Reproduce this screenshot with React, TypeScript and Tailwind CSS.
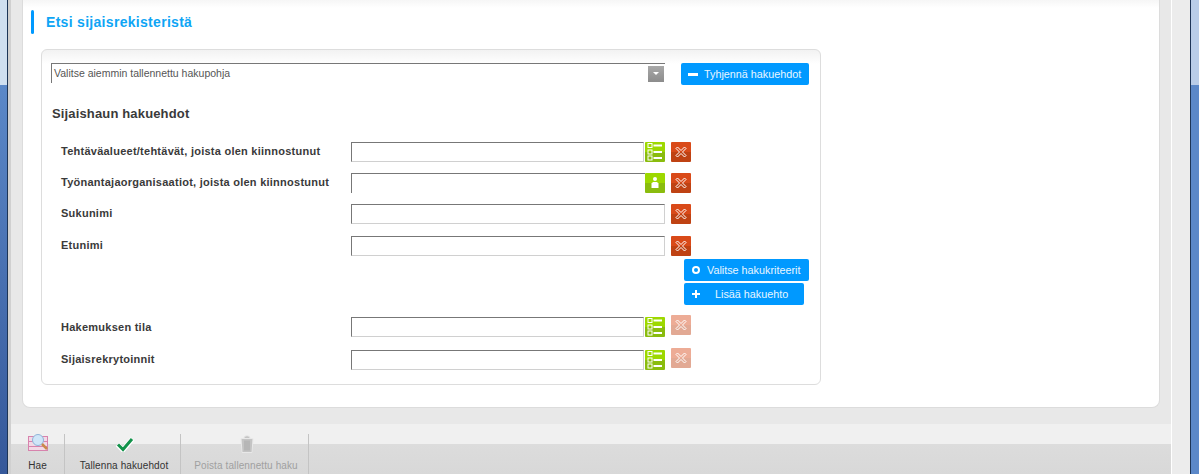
import React from 'react';

const ClearIcon = () => (
  <svg width="12" height="12" viewBox="0 0 12 12" fill="none" stroke="#fff" strokeWidth="1">
    <path d="M2.5 1 L6 4.5 L9.5 1 L11 2.5 L7.5 6 L11 9.5 L9.5 11 L6 7.5 L2.5 11 L1 9.5 L4.5 6 L1 2.5 Z" />
  </svg>
);

const ListIcon = () => (
  <svg width="20" height="20" viewBox="0 0 20 20" fill="none">
    <rect x="3" y="1.5" width="4" height="4" stroke="#fff" />
    <rect x="3" y="8" width="4" height="4" stroke="#fff" />
    <rect x="3" y="14" width="4" height="4" stroke="#fff" />
    <path d="M8.5 3.5 H17 M8.5 10 H17 M8.5 16 H17" stroke="#fff" strokeWidth="2" />
  </svg>
);

const PersonIcon = () => (
  <svg width="20" height="20" viewBox="0 0 20 20" fill="#fff">
    <circle cx="10" cy="6" r="2" />
    <path d="M6.5 15 V10.5 L8 9 H12 L13.5 10.5 V15 Z" />
  </svg>
);

const GreenButton = ({ children }: { children: React.ReactNode }) => (
  <div className="flex h-5 w-5 items-center justify-center rounded-[1px] bg-[linear-gradient(#9dd800_50%,#8abc0e_50%)]">
    {children}
  </div>
);

const RedButton = ({ disabled = false }: { disabled?: boolean }) => (
  <div
    className={`ml-1.5 flex h-5 w-5 items-center justify-center rounded-[1px] bg-[linear-gradient(#d94a19_50%,#bf4213_50%)] ${
      disabled ? 'mb-1 opacity-45' : ''
    }`}
  >
    <ClearIcon />
  </div>
);

const BlueButton = ({
  icon,
  label,
  className,
}: {
  icon: React.ReactNode;
  label: string;
  className: string;
}) => (
  <div className={`flex h-[22px] items-center rounded-[2px] bg-[#0099ff] text-[10.8px] text-[#e8f6ff] ${className}`}>
    {icon}
    <span>{label}</span>
  </div>
);

const Row = ({
  label,
  icon,
  disabled,
  flush,
  labelClass = 'mb-0.5',
  className,
}: {
  label: string;
  icon?: React.ReactNode;
  disabled?: boolean;
  flush?: boolean;
  labelClass?: string;
  className: string;
}) => (
  <div className={`flex h-5 items-center ${className}`}>
    <div className={`w-[300px] pl-[10px] text-[11px] font-bold tracking-[0.25px] text-[#3a3a3a] ${labelClass}`}>{label}</div>
    {icon ? (
      flush ? (
        <>
          <input className="h-5 w-[294px] border-t border-l border-[#777] bg-white" />
          <GreenButton>{icon}</GreenButton>
        </>
      ) : (
        <>
          <input className="h-5 w-[293px] border border-[#d0d0d0] border-t-[#777] border-l-[#777] bg-white" />
          <div className="ml-px">
            <GreenButton>{icon}</GreenButton>
          </div>
        </>
      )
    ) : (
      <input className="h-5 w-[314px] border border-[#d0d0d0] border-t-[#777] border-l-[#777] bg-white" />
    )}
    <RedButton disabled={disabled} />
  </div>
);

const ToolbarItem = ({
  icon,
  label,
  muted,
  className,
}: {
  icon: React.ReactNode;
  label: string;
  muted?: boolean;
  className: string;
}) => (
  <div className={`flex h-10 flex-col items-center border-r border-[#c4c4c4] ${className}`}>
    <div className="flex h-[25px] items-start">{icon}</div>
    <div className={`text-[10px] leading-[14px] tracking-[0.1px] ${muted ? 'text-[#a0a0a0]' : 'text-[#333]'}`}>{label}</div>
  </div>
);

export default function App() {
  return (
    <div className="flex h-[474px] w-[1199px] overflow-hidden bg-[#e8e8e8] font-['Liberation_Sans',sans-serif]">
      {/* left window frame */}
      <div className="flex w-2 flex-col border-r border-[#1d3557]">
        <div className="h-[85px] bg-[#cfdff0]" />
        <div className="flex-1 bg-[linear-gradient(#5b88c8,#35589a)]" />
      </div>
      <div className="w-[3px] bg-[#d0d0d0]" />

      {/* main column */}
      <div className="flex w-[1160px] flex-col">
        <div className="h-[424px] px-[11px]">
          <div className="h-[408px] w-[1138px] rounded-b-lg border-x border-b border-[#dcdcdc] bg-[linear-gradient(#f6f6f6,#fff_8px)] pt-[10px]">
            <div className="flex h-6 items-center pl-2">
              <div className="h-6 w-[3px] rounded-sm bg-[#0099ff]" />
              <h1 className="ml-3 text-[14px] font-bold tracking-[0.3px] text-[#0ea5f5]">Etsi sijaisrekisteristä</h1>
            </div>

            <div className="ml-[18px] mt-[15px] h-[336px] w-[780px] rounded-md border border-[#dddddd] bg-[linear-gradient(#f2f2f2,#fff_14px)] pl-[9px] pt-[13px]">
              <div className="flex h-[22px]">
                <div className="flex h-5 w-[614px] items-center justify-between border-t border-l border-[#777] pl-[2px] pr-px text-[10.5px] text-[#555]">
                  <span>Valitse aiemmin tallennettu hakupohja</span>
                  <div className="flex h-4 w-4 items-center justify-center bg-[linear-gradient(#a8a8a8,#8c8c8c)]">
                    <div className="h-0 w-0 border-x-[3px] border-t-[3px] border-x-transparent border-t-white" />
                  </div>
                </div>
                <BlueButton
                  className="ml-4 w-[128px] pl-[7px]"
                  label="Tyhjennä hakuehdot"
                  icon={<div className="mr-[6px] h-[3px] w-2.5 bg-white" />}
                />
              </div>

              <h2 className="ml-px mt-[21px] text-[13px] font-bold leading-4 tracking-[0.15px] text-[#3a3a3a]">Sijaishaun hakuehdot</h2>

              <Row className="mt-[20px]" label="Tehtäväalueet/tehtävät, joista olen kiinnostunut" icon={<ListIcon />} />
              <Row className="mt-[11px]" label="Työnantajaorganisaatiot, joista olen kiinnostunut" icon={<PersonIcon />} flush />
              <Row className="mt-[11px]" label="Sukunimi" />
              <Row className="mt-3" label="Etunimi" />

              <div className="ml-[633px] mt-[3px] flex flex-col items-start gap-0.5">
                <BlueButton
                  className="w-[125px] pl-2"
                  label="Valitse hakukriteerit"
                  icon={<div className="mr-[7px] h-2 w-2 rounded-full border-2 border-white" />}
                />
                <BlueButton
                  className="w-[120px] pl-2"
                  label="Lisää hakuehto"
                  icon={
                    <svg className="mr-[15px]" width="8" height="8" viewBox="0 0 8 8" fill="#fff">
                      <path d="M3 0 H5 V3 H8 V5 H5 V8 H3 V5 H0 V3 H3 Z" />
                    </svg>
                  }
                />
              </div>

              <Row className="mt-3" label="Hakemuksen tila" icon={<ListIcon />} labelClass="" disabled />
              <Row className="mt-[13px]" label="Sijaisrekrytoinnit" icon={<ListIcon />} disabled />
            </div>
          </div>
        </div>

        {/* bottom toolbar */}
        <div className="h-[50px] bg-[linear-gradient(#f0f0f0_20px,#dcdcdc_20px,#d8d8d8)]">
          <div className="flex pt-[10px]">
            <ToolbarItem
              className="w-[54px]"
              label="Hae"
              icon={
                <svg width="22" height="19" viewBox="0 0 22 19" fill="none">
                  <rect x="1" y="2" width="20" height="15" fill="#f3d9e6" />
                  <path d="M1 2.5 H21 M1 7.5 H21 M1 12.5 H21 M1 16.5 H21 M1.5 2 V17 M20.5 2 V17" stroke="#d783ad" />
                  <circle cx="11" cy="6" r="5.5" fill="#cfe6f8" stroke="#8fb4d8" />
                  <path d="M15 10 L20 15" stroke="#c98a4a" strokeWidth="2.5" />
                </svg>
              }
            />
            <ToolbarItem
              className="w-[116px] pl-[3px]"
              label="Tallenna hakuehdot"
              icon={
                <svg width="18" height="16" viewBox="0 0 18 16" fill="none" className="ml-[2px] mt-[2px]">
                  <path d="M1.5 8.5 L7 14 L16.5 3" stroke="#fff" strokeWidth="5" />
                  <path d="M2 8.5 L7 13.5 L16 3" stroke="#12924a" strokeWidth="3" />
                </svg>
              }
            />
            <ToolbarItem
              className="w-[128px] pl-[3px]"
              muted
              label="Poista tallennettu haku"
              icon={
                <svg width="14" height="20" viewBox="0 0 14 19" fill="#c4c4c4" stroke="#e8e8e8" className="ml-[2px]">
                  <path d="M1 4 H13 L12 18 H2 Z" />
                  <path d="M4 3.5 C4 0.5 10 0.5 10 3.5" />
                  <path d="M5 6 V16 M7 6 V16 M9 6 V16" stroke="#a8a8a8" />
                </svg>
              }
            />
          </div>
        </div>
      </div>

      {/* right window frame */}
      <div className="w-px bg-white" />
      <div className="w-[18px] bg-[#ececec]" />
      <div className="w-px bg-[#1d3557]" />
      <div className="flex-1 bg-[linear-gradient(#b9cde8_85px,#5b88c8_85px)]" />
    </div>
  );
}
